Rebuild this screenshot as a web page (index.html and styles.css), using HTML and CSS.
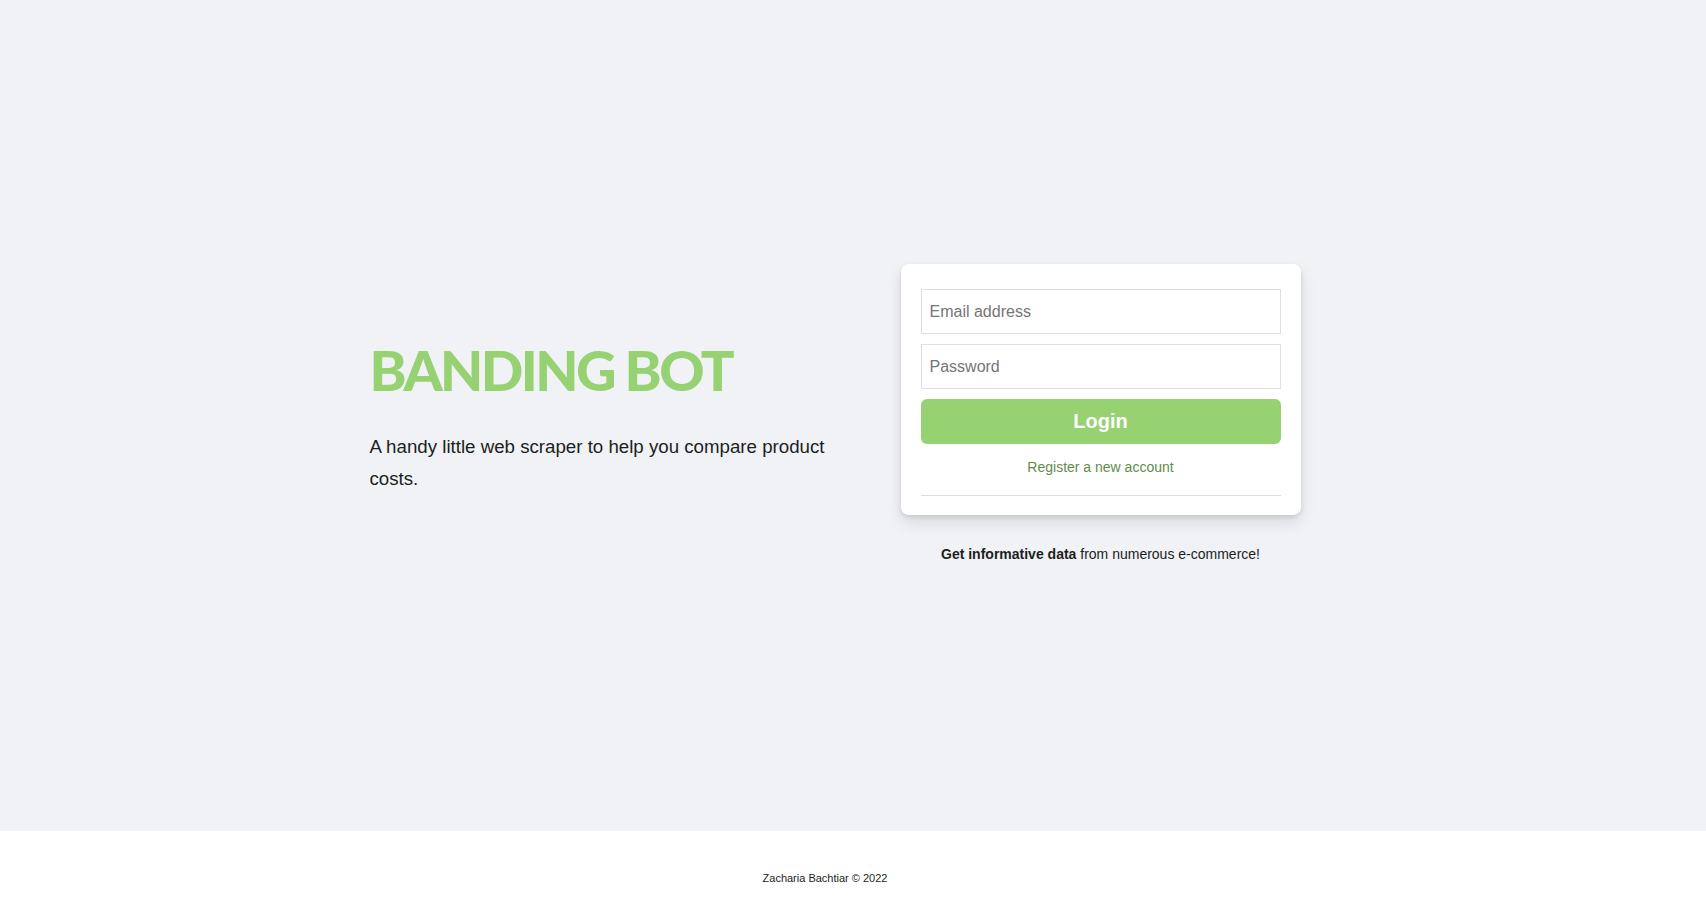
FILE: index.html
```html
<!DOCTYPE html>
<html lang="en">
<head>
<meta charset="utf-8">
<title>Banding Bot</title>
<link rel="stylesheet" href="styles.css">
</head>
<body>
<main class="main">
  <div class="content">
    <section class="intro">
      <h1 class="brand">BANDING BOT</h1>
      <p class="tagline">A handy little web scraper to help you compare product costs.</p>
    </section>
    <section class="side">
      <form class="card">
        <input class="field" type="text" placeholder="Email address">
        <input class="field" type="password" placeholder="Password">
        <button class="login" type="button">Login</button>
        <a class="register" href="#">Register a new account</a>
        <hr class="divider">
      </form>
      <p class="tip"><b>Get informative data</b> from numerous e-commerce!</p>
    </section>
  </div>
</main>
<footer class="footer">
  <p class="copy">Zacharia Bachtiar © 2022</p>
</footer>
</body>
</html>
```
FILE: styles.css
```css
* { box-sizing: border-box; }
html, body { margin: 0; padding: 0; }
body {
  font-family: "Liberation Sans", Arial, sans-serif;
  color: #1c1e21;
  background: #ffffff;
}
.main {
  height: 831px;
  padding-bottom: 4px;
  background: #f0f2f5;
  display: flex;
  align-items: center;
  justify-content: center;
}
.content {
  width: 931px;
  margin-right: 36px;
  display: flex;
  align-items: center;
  justify-content: space-between;
}
.intro {
  width: 490px;
  padding-top: 3px;
}
.brand {
  margin: 0 0 27px;
  font-family: Lato, sans-serif;
  font-weight: 900;
  font-size: 56px;
  line-height: 68px;
  letter-spacing: -2.6px;
  color: #96d172;
}
.tagline {
  margin: 0;
  font-size: 18.7px;
  line-height: 32px;
  color: #1c1e21;
}
.side {
  width: 400px;
  display: flex;
  flex-direction: column;
  align-items: center;
}
.card {
  width: 400px;
  background: #fff;
  border-radius: 8px;
  box-shadow: 0 2px 4px rgba(0,0,0,.1), 0 8px 16px rgba(0,0,0,.1);
  padding: 25px 20px 19px;
  display: flex;
  flex-direction: column;
}
.field {
  height: 45px;
  margin: 0 0 10px;
  border: 1px solid #dddfe2;
  border-radius: 0;
  padding: 0 8px;
  font-family: "Liberation Sans", Arial, sans-serif;
  font-size: 16px;
  color: #1c1e21;
  background: #fff;
  outline: none;
}
.field::placeholder { color: #757575; }
.login {
  height: 45px;
  border: none;
  border-radius: 6px;
  background: #96d172;
  color: #fff;
  font-family: "Liberation Sans", Arial, sans-serif;
  font-weight: bold;
  font-size: 20px;
}
.register {
  margin-top: 14px;
  text-align: center;
  font-size: 14px;
  line-height: 18px;
  color: #5f8c4a;
  text-decoration: none;
}
.divider {
  margin: 19px 0 0;
  border: none;
  border-top: 1px solid #dadde1;
  height: 0;
}
.tip {
  margin: 30px 0 0;
  font-size: 14px;
  line-height: 18px;
  text-align: center;
}
.tip b { font-weight: bold; }
.footer {
  height: 88px;
  display: flex;
  justify-content: center;
  padding-top: 40px;
}
.copy {
  margin: 0 56px 0 0;
  font-size: 11px;
  line-height: 14px;
  color: #1c1e21;
}
```
